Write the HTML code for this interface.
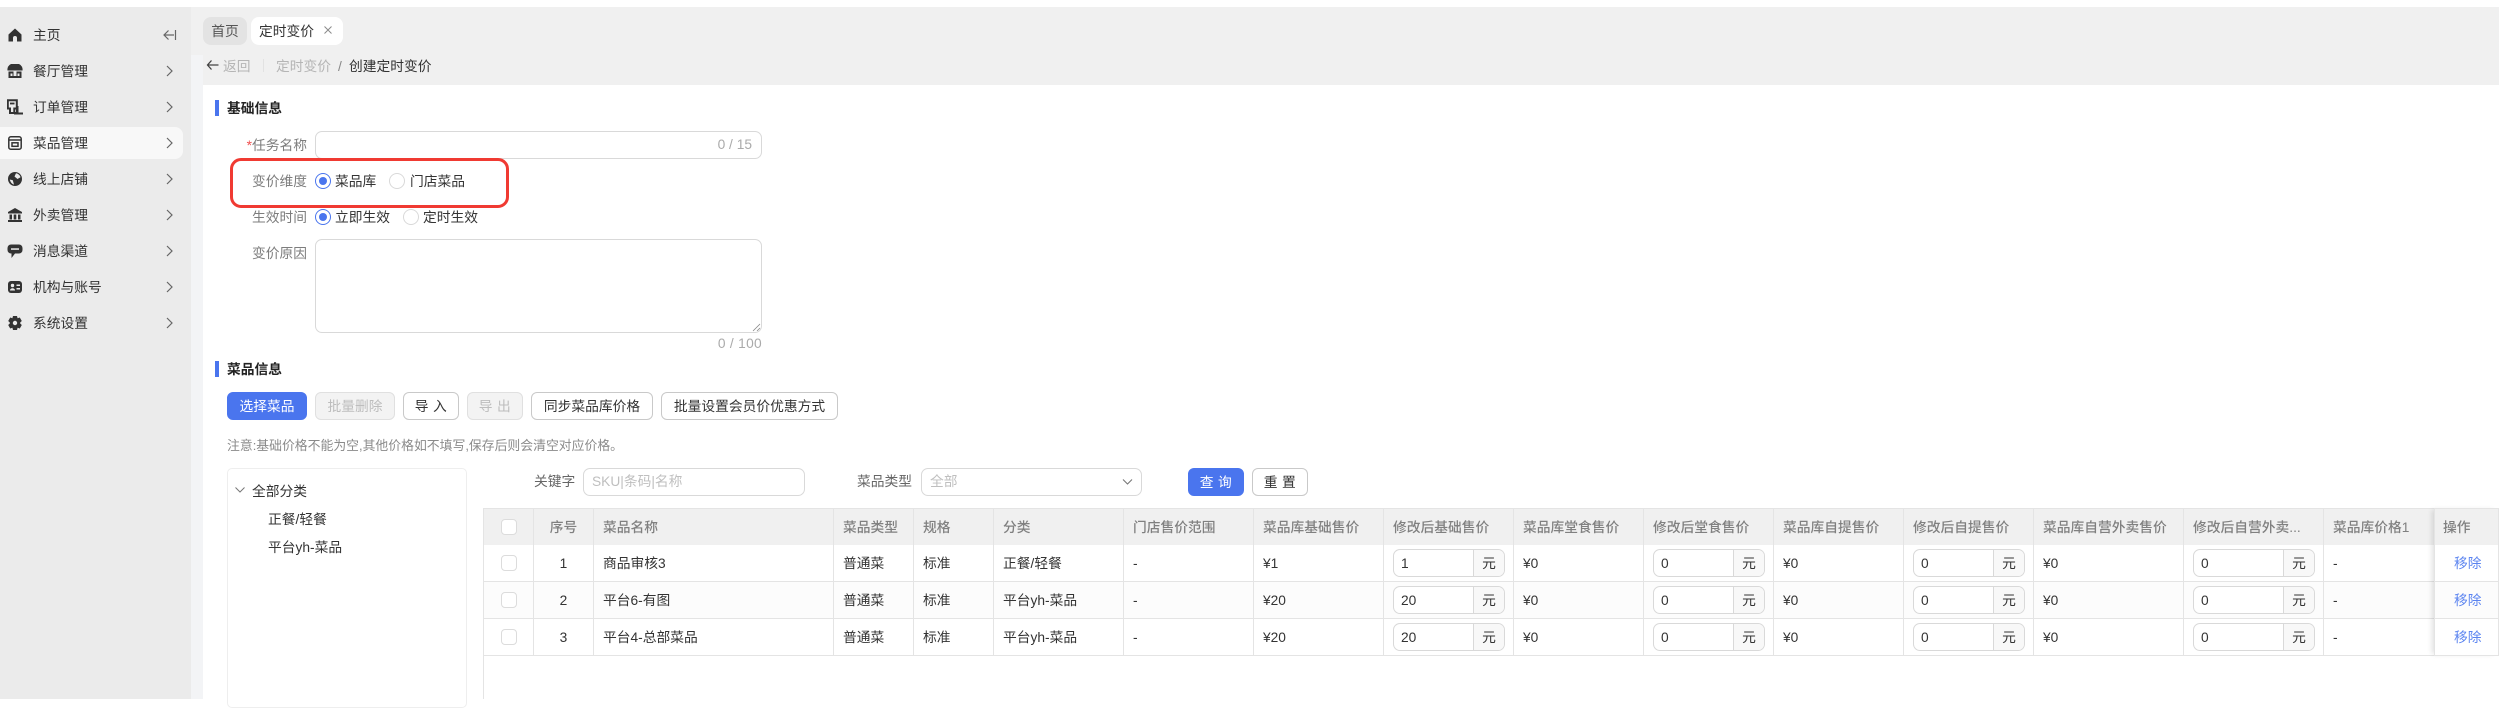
<!DOCTYPE html>
<html lang="zh-CN"><head><meta charset="utf-8"><title>创建定时变价</title>
<style>
*{box-sizing:border-box}
html,body{margin:0;padding:0}
body{width:2499px;height:699px;overflow:hidden;position:relative;background:#fff;font:13.75px/20px "Liberation Sans","Noto Sans CJK SC",sans-serif;color:#333}
.a{position:absolute;white-space:nowrap}
.side{position:absolute;left:0;top:7px;width:191px;height:692px;background:#ebebeb}
.top{position:absolute;left:191px;top:7px;width:2308px;height:78px;background:#f0f0f0}
.gut{position:absolute;left:191px;top:55px;width:12px;height:644px;background:#f3f4f6}
.main{position:absolute;left:203px;top:85px;width:2296px;height:614px;background:#fff}
.nav{position:absolute;left:33px;color:#333;height:20px;line-height:20px;white-space:nowrap;margin-top:1px}
.ic{position:absolute;left:7px;width:16px;height:16px}
.ch{position:absolute;left:165px;width:8px;height:12px}
.lb{position:absolute;width:100px;left:207px;text-align:right;color:#7d7d7d;line-height:20px;white-space:nowrap;margin-top:1px}
.box{position:absolute;border:1px solid #d9d9d9;border-radius:7px;background:#fff}
.r{position:absolute;width:16px;height:16px;border-radius:50%;border:1px solid #d9d9d9;background:#fff}
.r.on{border-color:#4a75ee}
.r.on:after{content:"";position:absolute;left:3px;top:3px;width:8px;height:8px;border-radius:50%;background:#4a75ee}
.bar{position:absolute;left:215px;width:4px;height:16px;background:#4a75ee}
.h{position:absolute;left:227px;font-weight:700;font-size:13.75px;line-height:20px;color:#222;margin-top:1px}
.btn{position:absolute;top:392px;height:28px;border:1px solid #c9c9c9;border-radius:6px;background:#fff;text-align:center;line-height:28px;color:#333;white-space:nowrap}
.btn.p{background:#4a75ee;border-color:#4a75ee;color:#fff}
.btn.d{background:#f3f3f3;border-color:#e0e0e0;color:#bdbdbd}
.sp{letter-spacing:4.5px;padding-left:4px}
table{position:absolute;left:484px;top:508px;border-collapse:separate;border-spacing:0;table-layout:fixed;width:2015px}
th,td{padding:2px 0 0 9px;border-right:1px solid #e4e4e4;border-bottom:1px solid #e4e4e4;text-align:left;white-space:nowrap;overflow:hidden;height:37px;font-size:13.75px;color:#333;font-weight:400;position:relative}
th{background:#f0f0f0;color:#808080;font-weight:500;border-top:1px solid #e4e4e4;border-bottom:0;height:37px}
td.c,th.c{text-align:center;padding:2px 0 0}
tr.z td{background:#fcfcfc}
.cb{display:inline-block;width:16px;height:16px;vertical-align:middle;border:1px solid #dcdcdc;border-radius:4px;background:#fff;position:relative;top:-1px}
.in{display:flex;height:28px;border:1px solid #d9d9d9;border-radius:7px;overflow:hidden;line-height:28px;background:#fff;position:relative;top:-1px}
.in b{flex:1;font-weight:400;padding-left:7px;color:#333}
.in i{width:31px;border-left:1px solid #d9d9d9;background:#f8f8f8;text-align:center;font-style:normal;color:#333}
.op{position:absolute;left:2434px;top:508px;width:65px;height:148px;border-left:1px solid #e4e4e4;box-shadow:-4px 0 5px -2px rgba(0,0,0,.12);pointer-events:none}
.lnk{color:#5b84f0}
</style></head><body>
<div class="side"></div><div class="top"></div><div class="gut"></div><div class="main"></div>

<div class="a" style="left:0;top:127px;width:183px;height:32px;background:#f8f8f8;border-radius:0 8px 8px 0"></div>

<svg class="ic" style="top:27px" viewBox="0 0 16 16"><path d="M8 1.500 14.500 7.500V14.500H10V11A2 2 0 0 0 6 11V14.500H1.500V7.500Z" fill="#333"/></svg>
<div class="nav" style="top:25px">主页</div>
<svg class="a" style="left:163px;top:29px" width="14" height="12" viewBox="0 0 14 12" fill="none" stroke="#666" stroke-width="1.200"><path d="M5.500 1.500 1 6l4.500 4.500M1 6h10M12.500 1v10"/></svg>

<svg class="ic" style="top:63px" viewBox="0 0 16 16"><path d="M4 1h8a6 6 0 0 1 3.500 6.500H.5A6 6 0 0 1 4 1Z" fill="#333"/><path d="M1.500 8.500v6.500h13V8.500H9.500v4.500h-3V8.500Z" fill="#333"/><rect x="3.500" y="10.500" width="2" height="2.500" fill="#ebebeb"/><rect x="10.500" y="10.500" width="2" height="2.500" fill="#ebebeb"/></svg>
<div class="nav" style="top:61px">餐厅管理</div>

<svg class="ic" style="top:99px" viewBox="0 0 16 16"><path d="M.8 1.200h9v8.300H7.300V14H3V9.500H.8Z" fill="none" stroke="#333" stroke-width="2"/><path d="M3 4.500h4.500" stroke="#333" stroke-width="1.800"/><path d="M9 7h2.500v6.500H16.500V15.500H7V13h2Z" fill="#333"/></svg>
<div class="nav" style="top:97px">订单管理</div>

<svg class="ic" style="top:135px" viewBox="0 0 16 16" fill="none" stroke="#333" stroke-width="1.500"><rect x="1.800" y="1.800" width="12.400" height="12.400" rx="2"/><path d="M2 5h12"/><rect x="5" y="7.800" width="6" height="3.500"/></svg>
<div class="nav" style="top:133px">菜品管理</div>

<svg class="ic" style="top:171px" viewBox="0 0 16 16"><circle cx="8" cy="8" r="7" fill="#333"/><path d="M9 2.300c2.500.5 4 2 4.500 4L10.500 8 7.500 5.500Z M2.800 8.500l3 .8 1.200 4.300C4.800 13 3.300 11 2.800 8.500Z" fill="#ebebeb"/></svg>
<div class="nav" style="top:169px">线上店铺</div>

<svg class="ic" style="top:207px" viewBox="0 0 16 16"><path d="M8 1 15 5v1.500H1V5Z" fill="#333"/><path d="M2.500 7.500h2.500v5H2.500ZM6.700 7.500h2.600v5H6.700ZM11 7.500h2.500v5H11Z" fill="#333"/><rect x="1" y="13" width="14" height="2" fill="#333"/></svg>
<div class="nav" style="top:205px">外卖管理</div>

<svg class="ic" style="top:243px" viewBox="0 0 16 16"><path d="M4 1.500h8a3.500 3.500 0 0 1 3.500 3.500v2a3.500 3.500 0 0 1-3.500 3.500H8L4.500 15v-4.500A3.500 3.500 0 0 1 .5 7V5A3.500 3.500 0 0 1 4 1.500Z" fill="#333"/><rect x="4" y="5.300" width="8" height="1.500" fill="#ebebeb"/></svg>
<div class="nav" style="top:241px">消息渠道</div>

<svg class="ic" style="top:279px" viewBox="0 0 16 16"><rect x="1" y="2" width="14" height="12" rx="3" fill="#333"/><circle cx="5.500" cy="6.500" r="1.700" fill="#ebebeb"/><path d="M3 11.500c0-3 5-3 5 0Z" fill="#ebebeb"/><rect x="9.500" y="5.500" width="3.500" height="1.500" fill="#ebebeb"/><rect x="9.500" y="9" width="3.500" height="1.500" fill="#ebebeb"/></svg>
<div class="nav" style="top:277px">机构与账号</div>

<svg class="ic" style="top:315px" viewBox="0 0 16 16"><path d="M6 1h4l.6 2.200 2.200-.7 2 3.500-1.600 1.500v1l1.600 1.500-2 3.500-2.200-.7L10 15H6l-.6-2.200-2.200.7-2-3.500L2.800 8.500v-1L1.200 6l2-3.500 2.200.7Z" fill="#333"/><circle cx="8" cy="8" r="2.200" fill="#ebebeb"/></svg>
<div class="nav" style="top:313px">系统设置</div>

<svg class="ch" style="top:65px" viewBox="0 0 8 12" fill="none" stroke="#666" stroke-width="1.200"><path d="M2 1l5 5-5 5"/></svg>
<svg class="ch" style="top:101px" viewBox="0 0 8 12" fill="none" stroke="#666" stroke-width="1.200"><path d="M2 1l5 5-5 5"/></svg>
<svg class="ch" style="top:137px" viewBox="0 0 8 12" fill="none" stroke="#666" stroke-width="1.200"><path d="M2 1l5 5-5 5"/></svg>
<svg class="ch" style="top:173px" viewBox="0 0 8 12" fill="none" stroke="#666" stroke-width="1.200"><path d="M2 1l5 5-5 5"/></svg>
<svg class="ch" style="top:209px" viewBox="0 0 8 12" fill="none" stroke="#666" stroke-width="1.200"><path d="M2 1l5 5-5 5"/></svg>
<svg class="ch" style="top:245px" viewBox="0 0 8 12" fill="none" stroke="#666" stroke-width="1.200"><path d="M2 1l5 5-5 5"/></svg>
<svg class="ch" style="top:281px" viewBox="0 0 8 12" fill="none" stroke="#666" stroke-width="1.200"><path d="M2 1l5 5-5 5"/></svg>
<svg class="ch" style="top:317px" viewBox="0 0 8 12" fill="none" stroke="#666" stroke-width="1.200"><path d="M2 1l5 5-5 5"/></svg>

<div class="a" style="left:203px;top:17px;width:44px;height:28px;background:#e3e3e3;border-radius:8px;text-align:center;line-height:29px;color:#555">首页</div>
<div class="a" style="left:251px;top:17px;width:92px;height:28px;background:#fff;border-radius:8px"></div>
<div class="a" style="left:259px;top:22px;color:#333">定时变价</div>
<svg class="a" style="left:323px;top:25px" width="10" height="10" viewBox="0 0 10 10" stroke="#8a8a8a" stroke-width="1"><path d="M1.500 1.500l7 7M8.500 1.500l-7 7"/></svg>

<svg class="a" style="left:206px;top:59px" width="14" height="12" viewBox="0 0 14 12" fill="none" stroke="#444" stroke-width="1.300"><path d="M5.500 1.500 1.500 6l4 4.500M1.500 6h11"/></svg>
<div class="a" style="left:223px;top:57px;color:#b5b5b5">返回</div>
<div class="a" style="left:263px;top:59px;width:1px;height:13px;background:#e2e2e2"></div>
<div class="a" style="left:276px;top:57px;color:#b5b5b5">定时变价</div>
<div class="a" style="left:338px;top:57px;color:#888">/</div>
<div class="a" style="left:349px;top:57px;color:#333">创建定时变价</div>

<div class="bar" style="top:100px"></div><div class="h" style="left:227px;top:98px">基础信息</div>

<div class="lb" style="top:135px"><span style="color:#f0504f">*</span>任务名称</div>
<div class="box" style="left:315px;top:131px;width:447px;height:28px"></div>
<div class="a" style="left:700px;width:52px;top:135px;text-align:right;color:#aaa">0 / 15</div>

<div class="lb" style="top:171px">变价维度</div>
<div class="r on" style="left:315px;top:173px"></div><div class="a" style="left:335px;top:172px">菜品库</div>
<div class="r" style="left:389px;top:173px"></div><div class="a" style="left:410px;top:172px">门店菜品</div>

<div class="lb" style="top:207px">生效时间</div>
<div class="r on" style="left:315px;top:209px"></div><div class="a" style="left:335px;top:208px">立即生效</div>
<div class="r" style="left:403px;top:209px"></div><div class="a" style="left:423px;top:208px">定时生效</div>

<div class="lb" style="top:243px">变价原因</div>
<div class="box" style="left:315px;top:239px;width:447px;height:94px"></div>
<svg class="a" style="left:752px;top:323px" width="9" height="9" viewBox="0 0 9 9" stroke="#888" stroke-width=".8"><path d="M1 8 8 1M5 8l3-3"/></svg>
<div class="a" style="left:700px;width:62px;top:334px;text-align:right;color:#aaa;letter-spacing:.3px">0 / 100</div>

<div class="a" style="left:230px;top:158px;width:279px;height:50px;border:3px solid #f03a32;border-radius:11px"></div>

<div class="bar" style="top:361px"></div><div class="h" style="left:227px;top:359px">菜品信息</div>

<div class="btn p" style="left:227px;width:80px">选择菜品</div>
<div class="btn d" style="left:315px;width:80px">批量删除</div>
<div class="btn sp" style="left:403px;width:56px">导入</div>
<div class="btn d sp" style="left:467px;width:56px">导出</div>
<div class="btn" style="left:531px;width:122px">同步菜品库价格</div>
<div class="btn" style="left:661px;width:177px">批量设置会员价优惠方式</div>

<div class="a" style="left:227px;top:436px;font-size:12.85px;color:#8a8a8a">注意:基础价格不能为空,其他价格如不填写,保存后则会清空对应价格。</div>

<div class="a" style="left:227px;top:468px;width:240px;height:240px;border:1px solid #eee;border-radius:5px"></div>
<svg class="a" style="left:235px;top:486px" width="10" height="8" viewBox="0 0 10 8" fill="none" stroke="#777" stroke-width="1"><path d="M.5 1.500 5 6l4.500-4.500"/></svg>
<div class="a" style="left:252px;top:482px">全部分类</div>
<div class="a" style="left:268px;top:510px">正餐/轻餐</div>
<div class="a" style="left:268px;top:538px">平台yh-菜品</div>

<div class="a" style="left:534px;top:472px;color:#666">关键字</div>
<div class="box" style="left:583px;top:468px;width:222px;height:28px"></div>
<div class="a" style="left:592px;top:472px;color:#bfbfbf">SKU|条码|名称</div>
<div class="a" style="left:857px;top:472px;color:#666">菜品类型</div>
<div class="box" style="left:921px;top:468px;width:221px;height:28px"></div>
<div class="a" style="left:930px;top:472px;color:#bfbfbf">全部</div>
<svg class="a" style="left:1122px;top:478px" width="11" height="8" viewBox="0 0 11 8" fill="none" stroke="#777" stroke-width="1.100"><path d="M1 1.500 5.500 6 10 1.500"/></svg>
<div class="btn p sp" style="left:1188px;top:468px;width:56px">查询</div>
<div class="btn sp" style="left:1252px;top:468px;width:56px">重置</div>

<div class="a" style="left:483px;top:508px;width:1px;height:191px;background:#e4e4e4"></div>
<table><colgroup><col style="width:50px"><col style="width:60px"><col style="width:240px"><col style="width:80px"><col style="width:80px"><col style="width:130px"><col style="width:130px"><col style="width:130px"><col style="width:130px"><col style="width:130px"><col style="width:130px"><col style="width:130px"><col style="width:130px"><col style="width:150px"><col style="width:140px"><col style="width:175px"></colgroup>
<tr><th class="c"><span class="cb"></span></th><th class="c">序号</th><th>菜品名称</th><th>菜品类型</th><th>规格</th><th>分类</th><th>门店售价范围</th><th>菜品库基础售价</th><th>修改后基础售价</th><th>菜品库堂食售价</th><th>修改后堂食售价</th><th>菜品库自提售价</th><th>修改后自提售价</th><th>菜品库自营外卖售价</th><th>修改后自营外卖...</th><th>菜品库价格1<span class="a" style="left:119px;top:9px;color:#808080">操作</span></th></tr>
<tr><td class="c"><span class="cb"></span></td><td class="c">1</td><td>商品审核3</td><td>普通菜</td><td>标准</td><td>正餐/轻餐</td><td>-</td><td>¥1</td><td><div class="in" style="width:112px"><b>1</b><i>元</i></div></td><td>¥0</td><td><div class="in" style="width:112px"><b>0</b><i>元</i></div></td><td>¥0</td><td><div class="in" style="width:112px"><b>0</b><i>元</i></div></td><td>¥0</td><td><div class="in" style="width:122px"><b>0</b><i>元</i></div></td><td>-<span class="a lnk" style="left:130px;top:9px">移除</span></td></tr>
<tr class="z"><td class="c"><span class="cb"></span></td><td class="c">2</td><td>平台6-有图</td><td>普通菜</td><td>标准</td><td>平台yh-菜品</td><td>-</td><td>¥20</td><td><div class="in" style="width:112px"><b>20</b><i>元</i></div></td><td>¥0</td><td><div class="in" style="width:112px"><b>0</b><i>元</i></div></td><td>¥0</td><td><div class="in" style="width:112px"><b>0</b><i>元</i></div></td><td>¥0</td><td><div class="in" style="width:122px"><b>0</b><i>元</i></div></td><td>-<span class="a lnk" style="left:130px;top:9px">移除</span></td></tr>
<tr><td class="c"><span class="cb"></span></td><td class="c">3</td><td>平台4-总部菜品</td><td>普通菜</td><td>标准</td><td>平台yh-菜品</td><td>-</td><td>¥20</td><td><div class="in" style="width:112px"><b>20</b><i>元</i></div></td><td>¥0</td><td><div class="in" style="width:112px"><b>0</b><i>元</i></div></td><td>¥0</td><td><div class="in" style="width:112px"><b>0</b><i>元</i></div></td><td>¥0</td><td><div class="in" style="width:122px"><b>0</b><i>元</i></div></td><td>-<span class="a lnk" style="left:130px;top:9px">移除</span></td></tr>
</table>
<div class="op"></div>
</body></html>
